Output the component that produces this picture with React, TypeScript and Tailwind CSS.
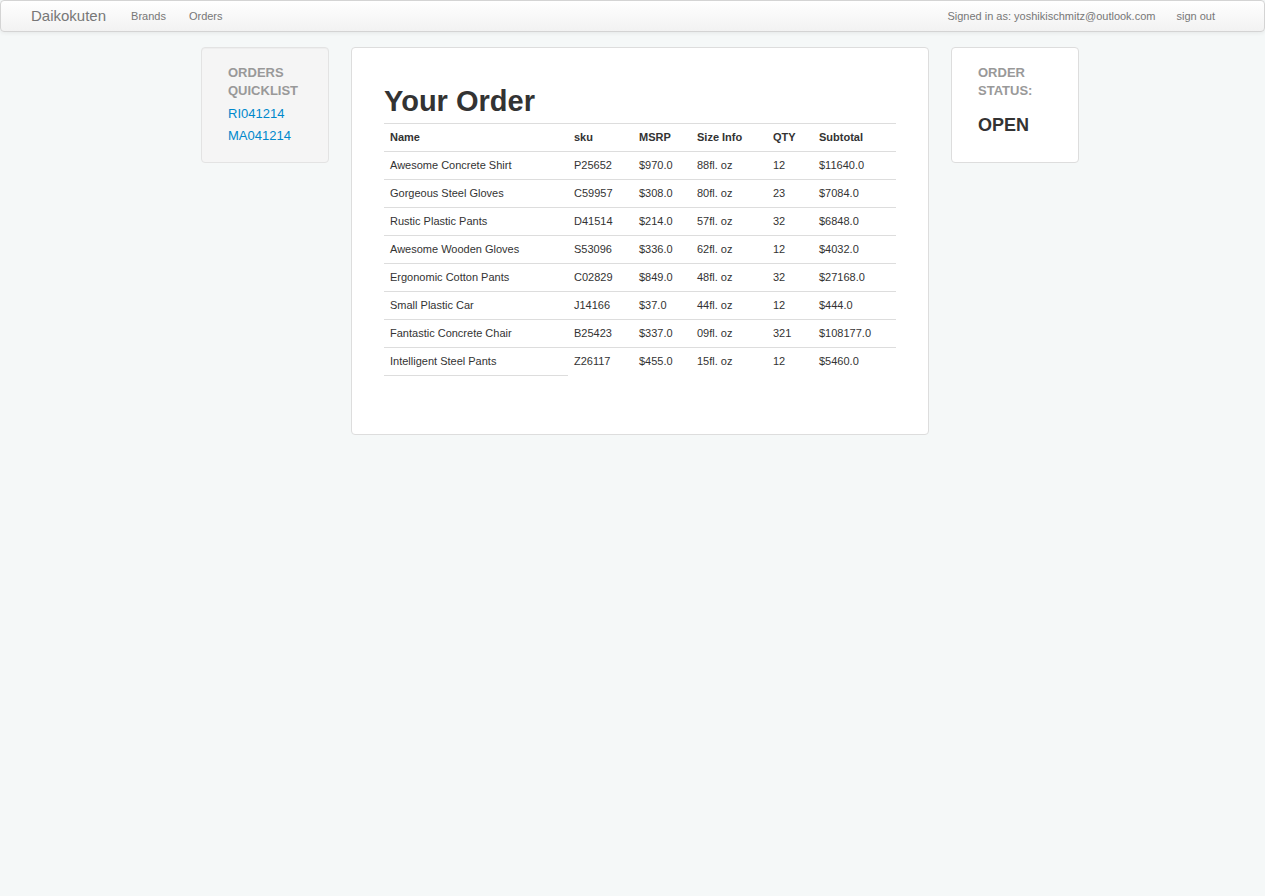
import React from "react";

const rows = [
  ["Awesome Concrete Shirt", "P25652", "$970.0", "88fl. oz", "12", "$11640.0"],
  ["Gorgeous Steel Gloves", "C59957", "$308.0", "80fl. oz", "23", "$7084.0"],
  ["Rustic Plastic Pants", "D41514", "$214.0", "57fl. oz", "32", "$6848.0"],
  ["Awesome Wooden Gloves", "S53096", "$336.0", "62fl. oz", "12", "$4032.0"],
  ["Ergonomic Cotton Pants", "C02829", "$849.0", "48fl. oz", "32", "$27168.0"],
  ["Small Plastic Car", "J14166", "$37.0", "44fl. oz", "12", "$444.0"],
  ["Fantastic Concrete Chair", "B25423", "$337.0", "09fl. oz", "321", "$108177.0"],
  ["Intelligent Steel Pants", "Z26117", "$455.0", "15fl. oz", "12", "$5460.0"],
];

const widths = ["w-[184px]", "w-[65px]", "w-[58px]", "w-[76px]", "w-[46px]", "w-[83px]"];

export default function App() {
  return (
    <div
      className="min-h-[896px] bg-[#f5f8f8] text-[#333]"
      style={{ fontFamily: '"Liberation Sans", Arial, Helvetica, sans-serif' }}
    >
      <div className="h-[32px] rounded-[4px] border border-[#d4d4d4] bg-gradient-to-b from-white to-[#f2f2f2] shadow-[0_1px_4px_rgba(0,0,0,0.065)] flex items-center">
        <div className="pl-[30px] text-[15px] text-[#777] leading-[20px]">Daikokuten</div>
        <div className="flex ml-[13px] text-[11px] text-[#777]">
          <span className="pl-[12px] pr-[11px]">Brands</span>
          <span className="pl-[12px] pr-[12px]">Orders</span>
        </div>
        <div className="ml-auto flex text-[11px] text-[#777] pr-[49px]">
          <span>Signed in as: yoshikischmitz@outlook.com</span>
          <span className="ml-[21px]">sign out</span>
        </div>
      </div>

      <div className="flex items-start gap-[22px] pl-[201px] pt-[15px]">
        <div className="w-[128px] rounded-[4px] border border-[#e3e3e3] bg-[#f5f5f5] pl-[26px] pt-[16px] pb-[15px] shadow-[inset_0_1px_1px_rgba(0,0,0,0.03)]">
          <div className="text-[13px] font-bold leading-[18px] text-[#999]">
            ORDERS
            <br />
            QUICKLIST
          </div>
          <div className="mt-[3px] text-[13px] leading-[22px] text-[#0088cc]">
            <div>RI041214</div>
            <div>MA041214</div>
          </div>
        </div>

        <div className="w-[578px] rounded-[4px] border border-[#ddd] bg-white px-[32px] pt-[33px] pb-[58px]">
          <h1 className="text-[29px] font-bold leading-[40px] text-[#333] mb-[2px]">Your Order</h1>
          <table className="table-fixed border-collapse w-[512px] text-[11px] text-[#333]">
            <thead>
              <tr>
                {["Name", "sku", "MSRP", "Size Info", "QTY", "Subtotal"].map((h, i) => (
                  <th
                    key={h}
                    className={`${widths[i]} h-[28px] border-t border-[#ddd] px-[6px] text-left font-bold align-top leading-[27px]`}
                  >
                    {h}
                  </th>
                ))}
              </tr>
            </thead>
            <tbody>
              {rows.map((r, ri) => (
                <tr key={ri}>
                  {r.map((c, ci) => (
                    <td
                      key={ci}
                      className={`h-[28px] border-t border-[#ddd] px-[6px] align-top leading-[27px] ${
                        ri === rows.length - 1 && ci === 0 ? "border-b" : ""
                      }`}
                    >
                      {c}
                    </td>
                  ))}
                </tr>
              ))}
            </tbody>
          </table>
        </div>

        <div className="w-[128px] rounded-[4px] border border-[#ddd] bg-white pl-[26px] pt-[16px] pb-[27px]">
          <div className="text-[13px] font-bold leading-[18px] text-[#999]">
            ORDER
            <br />
            STATUS:
          </div>
          <div className="mt-[15px] text-[18px] font-bold leading-[20px] text-[#333]">OPEN</div>
        </div>
      </div>
    </div>
  );
}
